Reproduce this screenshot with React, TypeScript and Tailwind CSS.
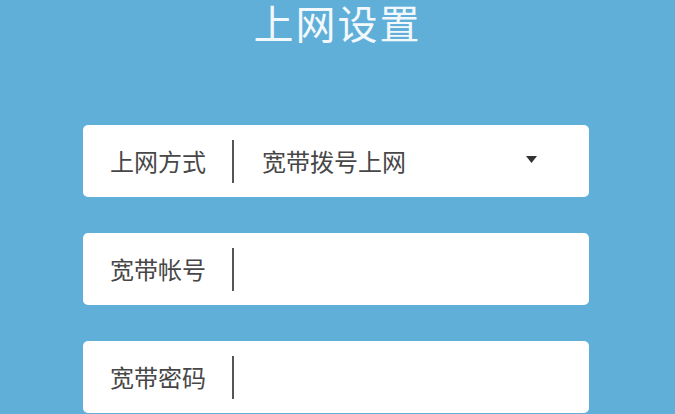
const fieldFont = { fontFamily: '"Noto Sans CJK SC", "Noto Sans", sans-serif' };

const Row = ({ label, value, select }: { label: string; value?: string; select?: boolean }) => (
  <div className="flex h-[72px] w-[506px] items-center rounded-[5px] bg-white pl-[27px] pr-[52px] text-[24px] text-[#474747]">
    <span className="w-[98px] leading-none">{label}</span>
    <span className="ml-[24px] h-[43px] w-[2px] bg-[#555]" />
    <span className="ml-[28px] flex-1 leading-none">{value}</span>
    {select && (
      <svg width="11" height="7" viewBox="0 0 11 7" className="mt-[-4px]">
        <path d="M0 0 L11 0 L5.5 7 Z" fill="#333" />
      </svg>
    )}
  </div>
);

export default function App() {
  return (
    <div className="flex h-[414px] w-[675px] flex-col items-center overflow-hidden bg-[#5fafd8]" style={fieldFont}>
      <h1 className="text-[40px] leading-[44px] tracking-[2px] text-[#f2f8fc]">上网设置</h1>
      <div className="mt-[81px] flex flex-col gap-[36px] self-start pl-[83px]">
        <Row label="上网方式" value="宽带拨号上网" select />
        <Row label="宽带帐号" />
        <Row label="宽带密码" />
      </div>
    </div>
  );
}
